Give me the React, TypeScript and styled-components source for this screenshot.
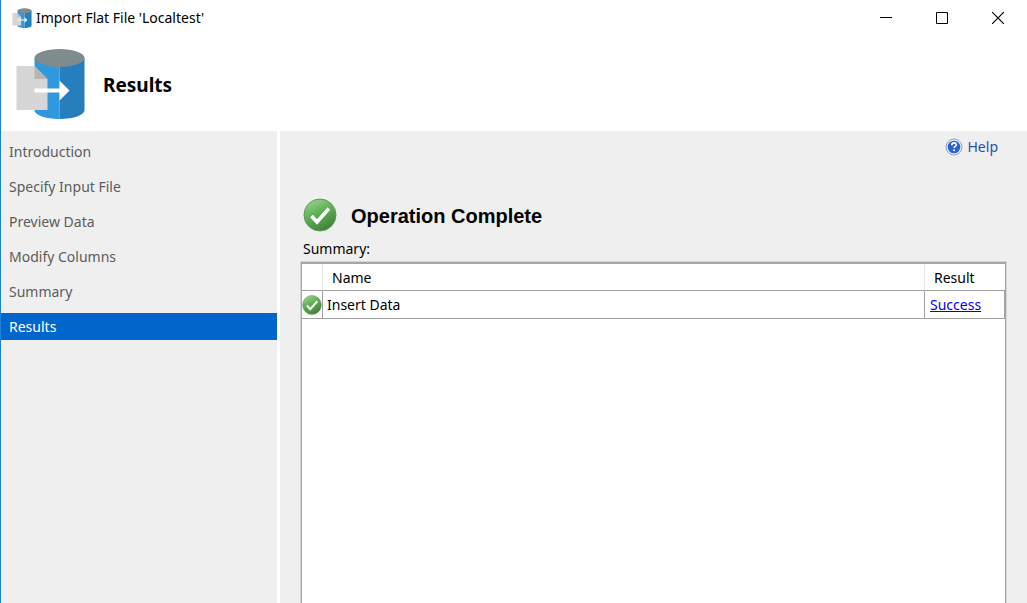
import React from "react";
import styled, { createGlobalStyle } from "styled-components";

const GlobalStyle = createGlobalStyle`
  * { box-sizing: border-box; }
  body { margin: 0; background: #fff; font-family: "Noto Sans", "Open Sans", sans-serif; font-size: 14px; color: #000; }
`;

const Window = styled.div`
  display: flex;
  flex-direction: column;
  min-height: 100vh;
  border-left: 1px solid #1883d7;
`;

const TitleBar = styled.header`
  display: flex;
  align-items: center;
  height: 36px;
  padding: 0 1px 0 11px;
`;

const TitleText = styled.span`
  flex: 1;
  padding-left: 4px;
  line-height: 20px;
`;

const CaptionButton = styled.button`
  display: flex;
  align-items: center;
  justify-content: center;
  width: 56px;
  height: 36px;
  padding: 0;
  border: 0;
  background: transparent;
`;

const Banner = styled.div`
  display: flex;
  align-items: center;
  gap: 17px;
  height: 95px;
  padding: 0 14px;
`;

const PageTitle = styled.h1`
  margin: 0;
  padding-top: 2px;
  font-size: 19px;
  line-height: 26px;
  font-weight: 700;
`;

const Body = styled.div`
  display: flex;
  flex: 1;
  background: #efefef;
`;

const Steps = styled.nav`
  display: flex;
  flex-direction: column;
  gap: 8px;
  width: 279px;
  flex-shrink: 0;
  padding-top: 7px;
  border-right: 3px solid #fff;
`;

const Step = styled.a<{ $active?: boolean }>`
  height: 27px;
  padding-left: 8px;
  line-height: 27px;
  text-decoration: none;
  color: ${(p) => (p.$active ? "#fff" : "#5c5c5c")};
  background: ${(p) => (p.$active ? "#0066cc" : "transparent")};
`;

const Main = styled.main`
  display: flex;
  flex-direction: column;
  flex: 1;
  min-width: 0;
  padding: 6px 20px 0;
`;

const HelpLink = styled.a`
  display: flex;
  align-items: center;
  align-self: flex-end;
  gap: 5px;
  margin-right: 9px;
  line-height: 20px;
  color: #2450b8;
  text-decoration: none;
`;

const Status = styled.div`
  display: flex;
  align-items: center;
  gap: 14px;
  margin-top: 41px;
  padding-left: 3px;
`;

const StatusTitle = styled.h2`
  margin: 0;
  padding-top: 2px;
  font-family: "Liberation Sans", sans-serif;
  font-size: 20px;
  line-height: 24px;
`;

const SummaryLabel = styled.p`
  margin: 6px 0 2px;
  padding-left: 3px;
  line-height: 22px;
`;

const Grid = styled.div`
  flex: 1;
  margin: 0 1px;
  border: 1px solid #a5a5aa;
  border-top-width: 2px;
  border-bottom: 0;
  box-shadow: 0 0 0 1px #d3d4db;
  background: #fff;
`;

const Table = styled.table`
  width: 100%;
  table-layout: fixed;
  border-collapse: separate;
  border-spacing: 0;
`;

const HeadCell = styled.th<{ $width?: number }>`
  width: ${(p) => (p.$width ? `${p.$width}px` : "auto")};
  height: 27px;
  padding: 2px 9px 0;
  border-right: 1px solid #e5e5e5;
  border-bottom: 1px solid #a0a0a0;
  font-weight: 400;
  text-align: left;
  line-height: 20px;
  &:last-child { border-right: 0; }
`;

const Cell = styled.td<{ $icon?: boolean }>`
  height: 28px;
  padding: 0 ${(p) => (p.$icon ? 0 : 4)}px;
  border-right: 1px solid #a0a0a0;
  border-bottom: 1px solid #a0a0a0;
  line-height: 20px;
  svg { display: block; }
`;

const ResultLink = styled.a`
  margin-left: 1px;
  color: #0000ff;
`;

function DatabaseIcon({ size }: { size: number }) {
  return (
    <svg width={size} height={size} viewBox="0 0 68 71" aria-hidden="true">
      <path d="M18 10v52c0 5 11 9 25 9V10z" fill="#2f98df" />
      <path d="M43 10v61c14 0 25-4 25-9V10z" fill="#267fbd" />
      <ellipse cx="43" cy="10" rx="25" ry="9" fill="#7f8c8d" />
      <path d="M0 18h18l13 13v31H0z" fill="#d6d6d6" />
      <path d="M18 18l13 13H18z" fill="#b5b5b5" />
      <path d="M18 40.500h25v-8l10 10-10 10v-8H18z" fill="#fff" />
    </svg>
  );
}

function CheckIcon({ size, id }: { size: number; id: string }) {
  return (
    <svg width={size} height={size} viewBox="0 0 34 34" aria-hidden="true">
      <defs>
        <linearGradient id={id} x1="0.2" y1="0" x2="0.7" y2="1">
          <stop offset="0" stopColor="#9ad58c" />
          <stop offset="0.45" stopColor="#5fae55" />
          <stop offset="1" stopColor="#3d8137" />
        </linearGradient>
      </defs>
      <circle cx="17" cy="17" r="16" fill={`url(#${id})`} stroke="#5c9a55" />
      <path d="M8.500 18l5.500 6L26 10.500" fill="none" stroke="#fff" strokeWidth="3.600" />
    </svg>
  );
}

function HelpIcon() {
  return (
    <svg width="18" height="18" viewBox="0 0 18 18" aria-hidden="true">
      <circle cx="9" cy="9" r="8" fill="#e4eaf5" stroke="#8fa3cc" />
      <circle cx="9" cy="9" r="6.300" fill="#2f62cc" />
      <path d="M6.800 7.300c0-3.300 4.700-3 4.500-.5-.1 1.500-2.200 1.500-2.200 3.200" fill="none" stroke="#fff" strokeWidth="1.600" />
      <circle cx="9.100" cy="12.300" r="1" fill="#fff" />
    </svg>
  );
}

const steps = ["Introduction", "Specify Input File", "Preview Data", "Modify Columns", "Summary", "Results"];

export default function App() {
  return (
    <Window>
      <GlobalStyle />
      <TitleBar>
        <DatabaseIcon size={20} />
        <TitleText>Import Flat File 'Localtest'</TitleText>
        <CaptionButton aria-label="Minimize">
          <svg width="12" height="12"><path d="M0 5.500h12" stroke="#000" /></svg>
        </CaptionButton>
        <CaptionButton aria-label="Maximize">
          <svg width="12" height="12"><path d="M.5.5h11v11H.5z" fill="none" stroke="#000" /></svg>
        </CaptionButton>
        <CaptionButton aria-label="Close">
          <svg width="12" height="12"><path d="M0 0l12 12M12 0L0 12" stroke="#000" strokeWidth="1.200" /></svg>
        </CaptionButton>
      </TitleBar>
      <Banner>
        <DatabaseIcon size={71} />
        <PageTitle>Results</PageTitle>
      </Banner>
      <Body>
        <Steps>
          {steps.map((s) => (
            <Step key={s} href="#" $active={s === "Results"}>{s}</Step>
          ))}
        </Steps>
        <Main>
          <HelpLink href="#"><HelpIcon />Help</HelpLink>
          <Status>
            <CheckIcon size={34} id="status-check" />
            <StatusTitle>Operation Complete</StatusTitle>
          </Status>
          <SummaryLabel>Summary:</SummaryLabel>
          <Grid>
            <Table>
              <thead>
                <tr>
                  <HeadCell $width={21} aria-label="Status" />
                  <HeadCell>Name</HeadCell>
                  <HeadCell $width={80}>Result</HeadCell>
                </tr>
              </thead>
              <tbody>
                <tr>
                  <Cell $icon><CheckIcon size={20} id="row-check" /></Cell>
                  <Cell>Insert Data</Cell>
                  <Cell><ResultLink href="#">Success</ResultLink></Cell>
                </tr>
              </tbody>
            </Table>
          </Grid>
        </Main>
      </Body>
    </Window>
  );
}
